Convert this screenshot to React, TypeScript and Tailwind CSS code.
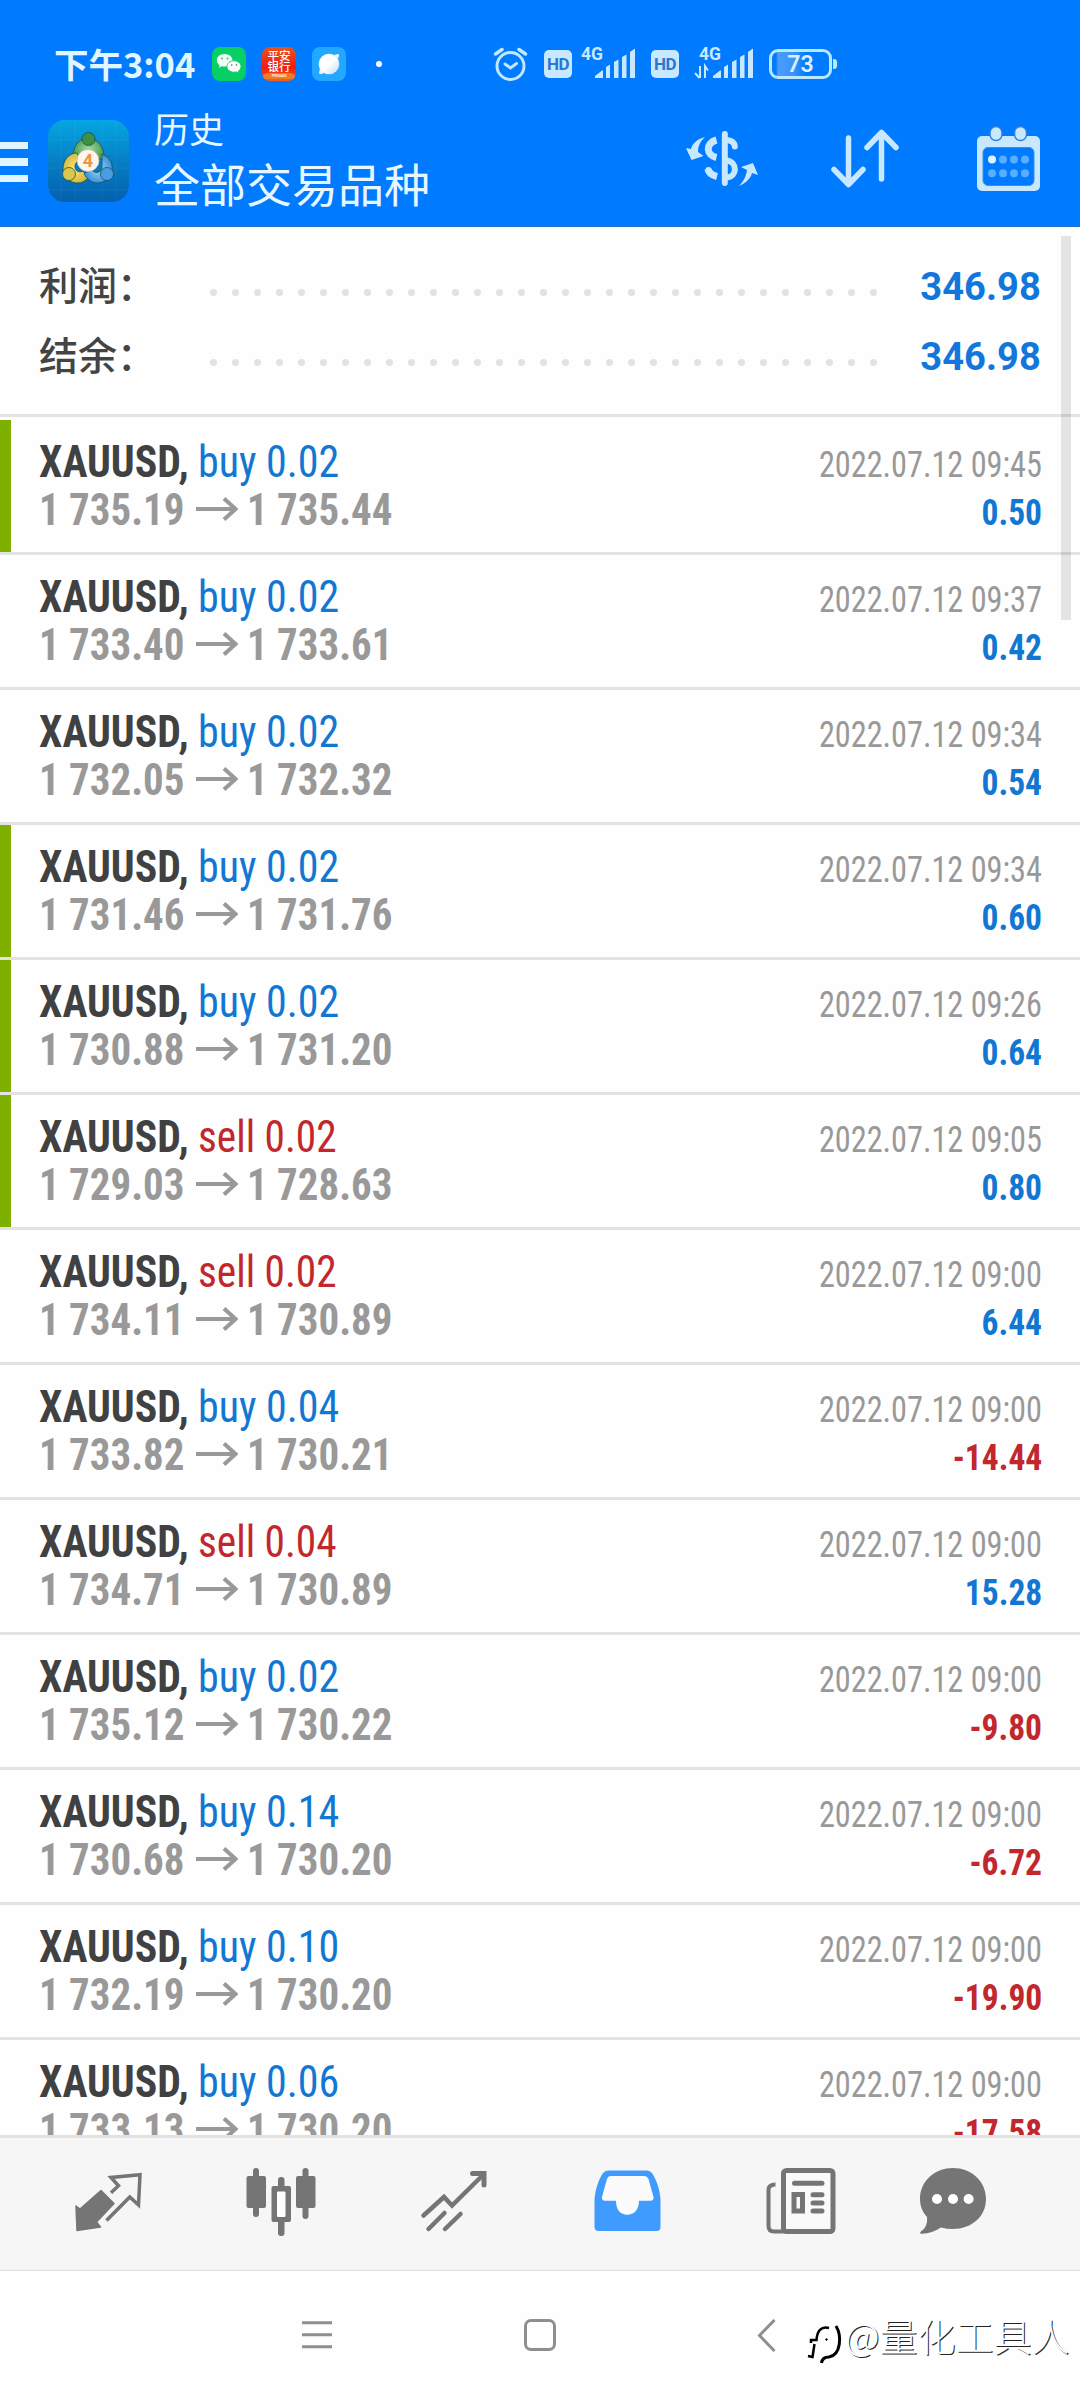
import React from "react";

type Trade = {
  side: "buy" | "sell";
  volume: string;
  open: string;
  close: string;
  time: string;
  profit: string;
  marked?: boolean;
};

const trades: Trade[] = [
  { side: "buy", volume: "0.02", open: "1 735.19", close: "1 735.44", time: "09:45", profit: "0.50", marked: true },
  { side: "buy", volume: "0.02", open: "1 733.40", close: "1 733.61", time: "09:37", profit: "0.42" },
  { side: "buy", volume: "0.02", open: "1 732.05", close: "1 732.32", time: "09:34", profit: "0.54" },
  { side: "buy", volume: "0.02", open: "1 731.46", close: "1 731.76", time: "09:34", profit: "0.60", marked: true },
  { side: "buy", volume: "0.02", open: "1 730.88", close: "1 731.20", time: "09:26", profit: "0.64", marked: true },
  { side: "sell", volume: "0.02", open: "1 729.03", close: "1 728.63", time: "09:05", profit: "0.80", marked: true },
  { side: "sell", volume: "0.02", open: "1 734.11", close: "1 730.89", time: "09:00", profit: "6.44" },
  { side: "buy", volume: "0.04", open: "1 733.82", close: "1 730.21", time: "09:00", profit: "-14.44" },
  { side: "sell", volume: "0.04", open: "1 734.71", close: "1 730.89", time: "09:00", profit: "15.28" },
  { side: "buy", volume: "0.02", open: "1 735.12", close: "1 730.22", time: "09:00", profit: "-9.80" },
  { side: "buy", volume: "0.14", open: "1 730.68", close: "1 730.20", time: "09:00", profit: "-6.72" },
  { side: "buy", volume: "0.10", open: "1 732.19", close: "1 730.20", time: "09:00", profit: "-19.90" },
  { side: "buy", volume: "0.06", open: "1 733.13", close: "1 730.20", time: "09:00", profit: "-17.58" },
];

function WeChatIcon() {
  return (
    <svg className="size-[34px]" viewBox="0 0 34 34">
      <rect width="34" height="34" rx="8" fill="#07cf63" />
      <path d="M12.5 7C8 7 4.800 9.800 4.800 13.300c0 2 1 3.700 2.800 4.900l-.8 2.500 3-1.500c1 .3 2 .4 3 .4 4.400-.1 7.700-2.800 7.700-6.300C20.500 9.800 17 7 12.500 7z" fill="#eefff5" />
      <path d="M22 13.800c-4 0-7 2.500-7 5.700s3 5.700 7 5.700c.9 0 1.700-.1 2.500-.3l2.500 1.400-.7-2.200c1.700-1.100 2.700-2.700 2.700-4.600 0-3.200-3-5.700-7-5.700z" fill="#fff" stroke="#07cf63" strokeWidth=".9" />
      <circle cx="10" cy="11.500" r="1" fill="#6a7" />
      <circle cx="15.500" cy="11.500" r="1" fill="#6a7" />
      <circle cx="19.700" cy="18" r=".9" fill="#6a7" />
      <circle cx="24.500" cy="18" r=".9" fill="#6a7" />
    </svg>
  );
}

function BankIcon() {
  return (
    <span className="flex size-[34px] flex-col items-center overflow-hidden rounded-[8px] bg-[linear-gradient(#e8541f,#f01c12_60%,#f5601a)] pt-[4px] text-[11.500px] font-medium leading-[10.500px] text-white">
      <span>平安</span>
      <span>银行</span>
      <span className="mt-[1px] flex h-[6px] w-full items-center justify-center rounded-t-full bg-[#f07a26] text-[4px] leading-none">PINGAN</span>
    </span>
  );
}

function PlanetIcon() {
  return (
    <svg className="size-[34px]" viewBox="0 0 34 34">
      <defs>
        <linearGradient id="planet" x1="0" y1="0" x2="1" y2="1">
          <stop offset=".5" stopColor="#fff" />
          <stop offset="1" stopColor="#b9dcf2" />
        </linearGradient>
      </defs>
      <rect width="34" height="34" rx="8" fill="#22a9ff" />
      <circle cx="17" cy="17" r="10.300" fill="url(#planet)" />
      <path d="M22 8l4-1q1.500 0 1 1.500L26 12zM8 22l-1 3.500q0 2 2 1.500l3.500-1z" fill="#e8f6ff" />
    </svg>
  );
}

function AlarmIcon() {
  return (
    <svg className="ml-[111px] size-[35px]" viewBox="493 47 35 35" fill="none" stroke="#bfe9ff" strokeWidth="3" strokeLinecap="round">
      <circle cx="510.500" cy="66" r="13.500" />
      <path d="M505 64l5.500 4 6-4.500" />
      <path d="M495.500 54l6.500-4.500M525.500 54l-6.500-4.500" strokeWidth="3.500" />
    </svg>
  );
}

function HdBadge({ className }: { className: string }) {
  return (
    <span className={`flex h-[28px] w-[28px] items-center justify-center rounded-[5px] bg-[#c8e8ff] text-[17px] font-bold leading-none tracking-[-0.5px] text-[#2a78cf] ${className}`}>
      HD
    </span>
  );
}

function Signal({ data, className }: { data?: boolean; className: string }) {
  return (
    <svg className={`h-[34px] w-[58px] overflow-visible ${className}`} viewBox="578 47 58 34" fill="#c8e8ff">
      <text x="581" y="60" fontSize="17.500" fontWeight="700">4G</text>
      <path d="M595 78v-2l7-5.500h1V78zM606 67l4-2.500V78h-4zM614 62l4.500-2.500V78H614zM622 57l4.500-2.500V78H622zM630 52l5-3.500V78h-5z" />
      {data && <path d="M581 66v12M576 73l4.500 5M586 78V66l3 4.500" transform="translate(1 0)" fill="none" stroke="#c8e8ff" strokeWidth="2" />}
    </svg>
  );
}

function Battery() {
  return (
    <span className="ml-[15px] flex items-center">
      <span className="flex h-[30px] w-[63px] items-center justify-center rounded-[9px] border-[3.500px] border-[#b9e8ff] bg-[linear-gradient(90deg,transparent_4px,#4a9dff_6px,#3a92fb_22px,transparent_34px)] text-[23px] font-semibold leading-none text-[#d8f1ff]">
        73
      </span>
      <span className="ml-px h-[10px] w-[4px] rounded-r-[3px] bg-[#b9e8ff]" />
    </span>
  );
}

function StatusBar() {
  return (
    <div className="flex h-[128px] items-center pl-[54px] text-[#e2f6ff]">
      <span className="mb-[2px] flex w-[158px] items-baseline whitespace-nowrap font-['Noto_Sans_CJK_SC',sans-serif] text-[34.500px] font-bold leading-[40px]">
        <span>下午</span>
        <span>3:04</span>
      </span>
      <span className="flex items-center gap-[16px]">
        <WeChatIcon />
        <BankIcon />
        <PlanetIcon />
      </span>
      <span className="ml-[30px] size-[6px] rounded-full bg-white" />
      <AlarmIcon />
      <HdBadge className="ml-[16px]" />
      <Signal className="ml-[6px]" />
      <HdBadge className="ml-[15px]" />
      <Signal data className="ml-[17px]" />
      <Battery />
    </div>
  );
}

function AppIcon() {
  return (
    <svg className="ml-[20px] h-[82px] w-[81px]" viewBox="0 0 81 82">
      <defs>
        <linearGradient id="tile" x1="0" y1="0" x2="0" y2="1">
          <stop offset="0" stopColor="#05a6e2" />
          <stop offset=".5" stopColor="#067fc4" />
          <stop offset="1" stopColor="#0460ae" />
        </linearGradient>
        <radialGradient id="leaf"><stop offset="0" stopColor="#a5dc9c" /><stop offset="1" stopColor="#4a9d50" /></radialGradient>
        <radialGradient id="gold"><stop offset="0" stopColor="#f8e878" /><stop offset="1" stopColor="#d6ba3c" /></radialGradient>
        <radialGradient id="sky"><stop offset="0" stopColor="#9fd8f8" /><stop offset="1" stopColor="#3a92dc" /></radialGradient>
      </defs>
      <rect width="81" height="82" rx="17" fill="url(#tile)" />
      <path d="M13 0v82M27 0v82M54 0v82M68 0v82M0 20h81M0 34h81M0 48h81M0 70h81" stroke="#fff" strokeOpacity=".05" />
      <g stroke="#1b4f5c" strokeWidth=".8">
        <path d="M25 40c-1-12 5-22 15-22s17 10 16 22l-8-2c-2-8-14-8-16 0z" fill="url(#leaf)" />
        <path d="M29 33c-9 0-14 8-14 16 0 9 7 14 15 14 4 0 7-2 10-5l-5-7c-6 3-10-3-7-8l4-3z" fill="url(#gold)" />
        <path d="M54 34c8 3 11 9 10 16-1 8-8 13-15 13-5 0-11-4-13-10l8-3c4 5 11 2 10-5z" fill="url(#sky)" />
        <circle cx="40.500" cy="19" r="6.500" fill="#3f8f45" />
        <circle cx="21" cy="54" r="6.500" fill="#dcc64e" />
        <circle cx="59" cy="54" r="6.500" fill="#4a9de0" />
      </g>
      <circle cx="40" cy="40.500" r="11" fill="#fbf6f0" stroke="#c5b8a8" strokeWidth=".8" />
      <text x="40" y="47" textAnchor="middle" fontSize="18" fontWeight="700" fill="#ee9440">4</text>
    </svg>
  );
}

function CurrencyIcon() {
  return (
    <svg className="mb-[4px] h-[58px] w-[74px]" viewBox="685 131 74 58" fill="none" stroke="#c8e8ff" strokeWidth="6" strokeLinecap="round">
      <path d="M724.800 135v49" />
      <path d="M716.500 141C705.500 144 705.500 156 716.500 158.500M717 177.500C711.500 176 708.500 174 708 170" strokeLinecap="butt" strokeWidth="7" />
      <path d="M708.500 171v.5" strokeWidth="6" />
      <path d="M727 141C732 141.500 734.500 144 734.800 147.500M727 161.500C737.500 163 737.500 177.500 727 178.500" />
      <path d="M705 138C697 140 692 145 691 150L686 149L691.500 161L703.500 157L698 153C698 147 700 143 705 138ZM739 187C746 184 751 179 752 174L758 176L753 164L741 168L747 171C746 177 744 182 739 187Z" fill="#c8e8ff" stroke="none" />
    </svg>
  );
}

function SortIcon() {
  return (
    <svg className="mb-[4px] ml-[71px] h-[60px] w-[70px]" viewBox="830 131 70 60" fill="none" stroke="#c8e8ff" strokeWidth="5.500" strokeLinecap="round" strokeLinejoin="round">
      <path d="M848.500 140v46M834 171.500l14.500 15 14.500-15M881.500 181v-46M867 149.500l14.500-15 14.500 15" />
    </svg>
  );
}

function CalendarIcon() {
  return (
    <svg className="mb-[4px] ml-[77px] h-[66px] w-[64px]" viewBox="977 127 64 66">
      <rect x="977" y="137" width="63" height="55" rx="5" fill="#c8e8ff" />
      <rect x="983" y="148.500" width="51" height="38" rx="5" fill="#007aff" stroke="#3f8fe0" strokeWidth="1" />
      {[996, 1020.5].map((cx) => (
        <rect key={cx} x={cx - 6} y="127.500" width="12" height="14" rx="6" fill="#c8e8ff" stroke="#2a80dd" strokeWidth="1.500" />
      ))}
      {[160.5, 174.3].map((cy, r) =>
        [992, 1003, 1014, 1025].map((cx, c) => (
          <circle key={`${cx}-${cy}`} cx={cx} cy={cy} r="4" fill={r === 0 && c === 0 ? "#dff5ff" : "#5aaeff"} />
        )),
      )}
    </svg>
  );
}

function Header() {
  return (
    <header className="h-[227px] shrink-0 border-b border-[#1f6fc4] bg-[#007aff]">
      <StatusBar />
      <div className="-mt-[19px] flex h-[104px] items-center">
        <div className="mt-[2px] flex w-[28px] flex-col gap-[9px]">
          <span className="h-[7.500px] bg-[#dff4ff]" />
          <span className="h-[7.500px] bg-[#dff4ff]" />
          <span className="h-[7.500px] bg-[#dff4ff]" />
        </div>
        <AppIcon />
        <div className="ml-[25px] flex w-[531px] flex-col pb-[8px] font-['Noto_Sans_CJK_SC',sans-serif] text-[#e6f7ff]">
          <span className="text-[35px] leading-[50px]">历史</span>
          <span className="text-[46px] leading-[58px]">全部交易品种</span>
        </div>
        <CurrencyIcon />
        <SortIcon />
        <CalendarIcon />
      </div>
    </header>
  );
}

function SummaryRow({ label, value }: { label: string; value: string }) {
  return (
    <div className="flex h-[70px] items-center pl-[39px] pr-[39px]">
      <span className="mb-[6px] w-[171px] whitespace-nowrap font-['Noto_Sans_CJK_SC',sans-serif] text-[39px] font-medium leading-[50px] text-[#444]">{label}</span>
      <span className="mt-[13px] flex w-[667px] justify-between">
        {Array.from({ length: 31 }, (_, i) => (
          <span key={i} className="size-[7px] rounded-full bg-[#e2e2e2]" />
        ))}
      </span>
      <span className="ml-auto mt-[2px] inline-block origin-right scale-x-[.965] text-[39.500px] font-bold leading-[50px] text-[#1277dc]">{value}</span>
    </div>
  );
}

function TradeRow({ t }: { t: Trade }) {
  const negative = t.profit.startsWith("-");
  return (
    <div className="flex h-[135px] shrink-0 border-b-[3px] border-b-[#e3e3e3] font-['Roboto',sans-serif] [font-stretch:75%]">
      <span className={`h-[132px] w-[11px] ${t.marked ? "bg-[#7fb000]" : ""}`} />
      <div className="pl-[28px] pt-[18px] text-[44px] leading-[48px]">
        <div className="flex">
          <span className="w-[159px] origin-left scale-x-[.95] whitespace-nowrap font-bold text-[#414141]">XAUUSD,</span>
          <span className={`origin-left whitespace-nowrap ${t.side === "buy" ? "scale-x-[.953] text-[#1277d2]" : "scale-x-[.938] text-[#c1272d]"}`}>
            {t.side} {t.volume}
          </span>
        </div>
        <div className="flex items-center font-bold text-[#999]">
          <span className="w-[157px] origin-left scale-x-[.93] whitespace-nowrap">{t.open}</span>
          <svg className="h-[26px] w-[42px]" viewBox="0 0 42 26" fill="none" stroke="#999" strokeWidth="4">
            <path d="M0 12h40M28 1.500L39.500 12 28 22.500" />
          </svg>
          <span className="ml-[9px] origin-left scale-x-[.93] whitespace-nowrap">{t.close}</span>
        </div>
      </div>
      <div className="ml-auto flex flex-col items-end pr-[38px] pt-[21px] text-[36px] leading-[48px]">
        <span className="origin-right scale-x-[.896] whitespace-nowrap text-[#999]">2022.07.12 {t.time}</span>
        <span className={`origin-right scale-x-[.93] font-bold ${negative ? "text-[#c1272d]" : "text-[#1277d2]"}`}>{t.profit}</span>
      </div>
    </div>
  );
}

function TabBar() {
  return (
    <nav className="flex h-[136px] shrink-0 items-start border-b border-t-[3px] border-b-[#dedede] border-t-[#e2e2e2] bg-[#f6f6f6] pl-[74px] pt-[28px]">
      <svg className="h-[72px] w-[70px]" viewBox="74 2166 70 72" fill="#757575">
        <path d="M76 2206L80 2209L101 2190.500L114 2203.500L96.500 2222L100.500 2227L77 2230.500Z" stroke="#757575" strokeWidth="1.500" strokeLinejoin="round" />
        <path d="M111 2192.700L118.500 2185.700L111 2177.500L140 2174.800L138.500 2205L129.800 2197L106.500 2220.500" fill="none" stroke="#757575" strokeWidth="3.500" />
      </svg>
      <svg className="ml-[101px] h-[72px] w-[73px]" viewBox="245 2166 73 72" fill="#757575">
        <rect x="253" y="2168" width="6" height="49" rx="3" />
        <rect x="246.500" y="2176" width="19.500" height="32" rx="2" />
        <rect x="302.500" y="2168" width="6" height="51" rx="3" />
        <rect x="296" y="2176" width="19.500" height="32" rx="2" />
        <rect x="278" y="2177" width="6.500" height="59" rx="3" />
        <rect x="271.500" y="2186" width="19.500" height="36" rx="2" />
        <rect x="277" y="2191.500" width="8.500" height="25.500" rx="1" fill="#fff" />
      </svg>
      <svg className="ml-[102px] h-[72px] w-[70px]" viewBox="420 2166 70 72" fill="none" stroke="#757575" strokeWidth="4.500" strokeLinecap="round">
        <path d="M423.500 2215.500L444 2197L452 2205.500L483 2175M428.500 2229L444.500 2213M445 2229L460.500 2214" />
        <path d="M472.500 2173.500H484V2185" strokeWidth="5" />
      </svg>
      <svg className="ml-[103px] h-[72px] w-[70px]" viewBox="593 2166 70 72" fill="#409bff">
        <path d="M594.500 2200C595 2189 599 2179 603 2173Q605 2170.500 608 2170.500H647Q650 2170.500 652 2173C656 2179 660 2189 660.500 2200V2227Q660.500 2231 656.500 2231H598.500Q594.500 2231 594.500 2227Z" />
        <path d="M611 2176H644Q647 2176 648.500 2179L653.500 2197Q654 2200.700 650.500 2200.700H639C639 2210 634 2214.700 627.300 2214.700C620.500 2214.700 616 2210 616 2200.700H605Q601.500 2200.700 602 2197L607 2179Q608 2176 611 2176Z" fill="#fbfbfb" />
      </svg>
      <svg className="ml-[102px] h-[72px] w-[73px]" viewBox="765 2166 73 72" fill="none" stroke="#757575" strokeWidth="5" strokeLinecap="round">
        <rect x="783.500" y="2170.500" width="49.500" height="61" rx="3" fill="#fafafa" />
        <path d="M775.500 2184.500Q768.500 2184.500 768.500 2190V2226Q768.500 2231.500 774 2231.500H784" strokeLinecap="butt" strokeWidth="4" />
        <path d="M794.500 2183.300H822M813 2194.700H822M813 2203H822M813 2211H822" />
        <rect x="794" y="2194.500" width="8.500" height="16.500" />
      </svg>
      <svg className="ml-[81px] h-[72px] w-[70px]" viewBox="919 2166 70 72" fill="#757575">
        <path d="M953 2168C971 2168 986 2181 986 2199C986 2217 971 2229 953 2229C949 2229 945 2228.500 941 2227.500C935 2231.500 928 2234 921 2233.700C919.500 2233.500 920 2232 921.500 2231C926 2228 927.500 2223 927 2217C922.500 2212 920 2206 920 2199C920 2181 935 2168 953 2168Z" />
        <g fill="#fff">
          <circle cx="937" cy="2199" r="5" />
          <circle cx="953" cy="2199" r="5" />
          <circle cx="968.600" cy="2199" r="5" />
        </g>
      </svg>
    </nav>
  );
}

function SystemNav() {
  return (
    <div className="flex h-[129px] shrink-0 items-start bg-[#fefefe] pl-[302px] pt-[48px]">
      <svg className="h-[32px] w-[30px]" viewBox="0 0 30 32" stroke="#8f8f8f" strokeWidth="3">
        <path d="M0 3.700h30M0 15.700h30M0 27.700h30" />
      </svg>
      <span className="ml-[192px] size-[32px] rounded-[7px] border-[3px] border-[#8f8f8f]" />
      <svg className="ml-[201px] h-[34px] w-[19px]" viewBox="0 0 19 34" fill="none" stroke="#8f8f8f" strokeWidth="3">
        <path d="M17.500 1L2.500 16.500L17.500 32" />
      </svg>
      <svg className="ml-[31px] mt-[3px] h-[44px] w-[36px]" viewBox="807 2322 36 44" fill="none" stroke="#000" strokeWidth="2.500">
        <path d="M829 2328C821 2326 817 2331 816.500 2340H811V2343" />
        <path d="M814.500 2344L812.500 2357L808 2356" />
        <path d="M836 2326C842 2336 841 2355 829 2357C824 2357 822 2359 821.500 2363" strokeWidth="3" />
        <circle cx="826.500" cy="2339.500" r=".8" fill="#000" strokeWidth="1" />
      </svg>
      <span className="ml-[2px] mt-[-12px] whitespace-nowrap font-['Noto_Sans_CJK_SC',sans-serif] text-[38px] font-light leading-[56px] text-white [text-shadow:1px_1px_0_#222]">
        @量化工具人
      </span>
    </div>
  );
}

export default function App() {
  return (
    <div className="relative flex h-[2400px] w-[1080px] flex-col overflow-hidden bg-[#fefefe] font-['Roboto','Noto_Sans_CJK_SC',sans-serif]">
      <Header />
      <main className="flex h-[1908px] shrink-0 flex-col overflow-hidden">
        <section className="mb-[3px] h-[190px] shrink-0 border-b-[3px] border-[#e3e3e3] pt-[24px]">
          <SummaryRow label="利润：" value="346.98" />
          <SummaryRow label="结余：" value="346.98" />
        </section>
        {trades.map((t, i) => (
          <TradeRow key={i} t={t} />
        ))}
      </main>
      <TabBar />
      <SystemNav />
      <span className="absolute left-[1061px] top-[236px] h-[384px] w-[10px] bg-black/10" />
    </div>
  );
}
